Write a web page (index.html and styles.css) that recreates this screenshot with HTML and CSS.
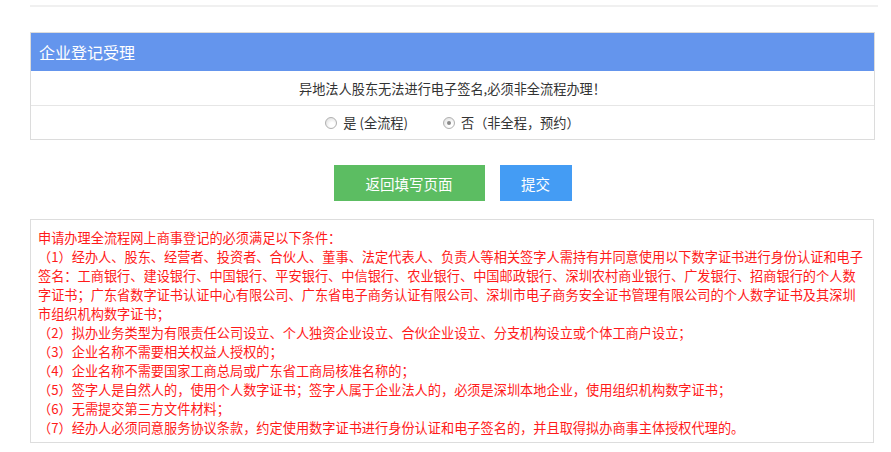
FILE: index.html
```html
<!DOCTYPE html>
<html lang="zh-CN">
<head>
    <meta charset="UTF-8">
    <title>企业登记受理</title>
    <link rel="stylesheet" href="styles.css">
</head>
<body>
    <div class="page">
        <div class="top-rule"></div>

        <div class="panel">
            <div class="panel-title">企业登记受理</div>
            <div class="panel-row notice">异地法人股东无法进行电子签名,必须非全流程办理！</div>
            <div class="panel-row choice">
                <label class="opt"><span class="radio"></span>是 (全流程)</label>
                <label class="opt"><span class="radio checked"></span>否（非全程，预约）</label>
            </div>
        </div>

        <div class="actions">
            <button class="btn btn-back">返回填写页面</button>
            <button class="btn btn-submit">提交</button>
        </div>

        <div class="terms">
            <p>申请办理全流程网上商事登记的必须满足以下条件：</p>
            <p>（1）经办人、股东、经营者、投资者、合伙人、董事、法定代表人、负责人等相关签字人需持有并同意使用以下数字证书进行身份认证和电子签名：工商银行、建设银行、中国银行、平安银行、中信银行、农业银行、中国邮政银行、深圳农村商业银行、广发银行、招商银行的个人数字证书；广东省数字证书认证中心有限公司、广东省电子商务认证有限公司、深圳市电子商务安全证书管理有限公司的个人数字证书及其深圳市组织机构数字证书；</p>
            <p>（2）拟办业务类型为有限责任公司设立、个人独资企业设立、合伙企业设立、分支机构设立或个体工商户设立；</p>
            <p>（3）企业名称不需要相关权益人授权的；</p>
            <p>（4）企业名称不需要国家工商总局或广东省工商局核准名称的；</p>
            <p>（5）签字人是自然人的，使用个人数字证书；签字人属于企业法人的，必须是深圳本地企业，使用组织机构数字证书；</p>
            <p>（6）无需提交第三方文件材料；</p>
            <p>（7）经办人必须同意服务协议条款，约定使用数字证书进行身份认证和电子签名的，并且取得拟办商事主体授权代理的。</p>
        </div>
    </div>
</body>
</html>
```

FILE: styles.css
```css
* {
    margin: 0;
    padding: 0;
    box-sizing: border-box;
}

body {
    font-family: "Noto Sans CJK SC", "Liberation Sans", sans-serif;
    background: #fff;
    color: #333;
    text-spacing-trim: space-all;
}

.page {
    width: 848px;
    margin-left: 30px;
    padding-top: 5px;
}

.top-rule {
    height: 2px;
    background: #f0f0f0;
}

.panel {
    width: 845px;
    margin-top: 25px;
    border: 1px solid #dcdcdc;
}

.panel-title {
    height: 38px;
    line-height: 38px;
    padding-left: 8px;
    background: #6495ed;
    color: #fff;
    font-size: 16px;
}

.panel-row {
    height: 34px;
    display: flex;
    align-items: center;
    justify-content: center;
    font-size: 13.2px;
}

.choice {
    border-top: 1px solid #e6e6e6;
    gap: 35px;
}

.opt {
    display: flex;
    align-items: center;
}

.radio {
    width: 12px;
    height: 12px;
    margin-right: 6px;
    border-radius: 50%;
    border: 1px solid #b0b0b0;
    background: radial-gradient(circle at 62% 68%, #fff 25%, #d8d8d8 100%);
    display: flex;
    align-items: center;
    justify-content: center;
}

.radio.checked::after {
    content: "";
    width: 4px;
    height: 4px;
    border-radius: 50%;
    background: #8a8a8a;
}

.actions {
    width: 845px;
    margin-top: 25px;
    display: flex;
    justify-content: center;
    gap: 15px;
}

.btn {
    height: 36px;
    border: none;
    color: #fff;
    font-family: inherit;
    font-size: 14.5px;
    cursor: pointer;
}

.btn-back {
    width: 151px;
    background: #5cbd62;
}

.btn-submit {
    width: 72px;
    background: #449cf4;
}

.terms {
    width: 844px;
    margin-top: 18px;
    padding: 8px 8px 5px 7px;
    border: 1px solid #dddddd;
    color: #ff1a1a;
    font-size: 13.2px;
    line-height: 19px;
}
```
